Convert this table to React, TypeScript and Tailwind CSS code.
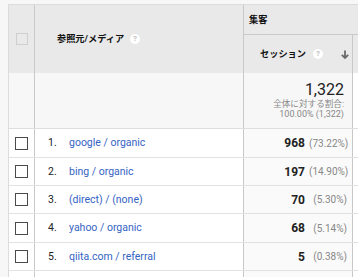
import React from "react";

const rows = [
  { n: "1.", label: "google / organic", v: "968", p: "(73.22%)", h: "h-[29px]" },
  { n: "2.", label: "bing / organic", v: "197", p: "(14.90%)", h: "h-[28px]" },
  { n: "3.", label: "(direct) / (none)", v: "70", p: "(5.30%)", h: "h-[28px]" },
  { n: "4.", label: "yahoo / organic", v: "68", p: "(5.14%)", h: "h-[29px]" },
  { n: "5.", label: "qiita.com / referral", v: "5", p: "(0.38%)", h: "h-[28px]" },
  { n: "", label: "", v: "", p: "", h: "h-[28px]" },
];

function Help() {
  return (
    <span className="ml-[6px] flex h-[10px] w-[10px] items-center justify-center rounded-full bg-white text-[8px] font-bold leading-none text-[#c4c4c4]">
      ?
    </span>
  );
}

export default function App() {
  return (
    <div className="h-[277px] w-[358px] overflow-hidden bg-[#f7f7f7] pl-[8px] pt-[4px] font-['Roboto','Noto_Sans_CJK_JP',sans-serif] text-[#333]">
      <div className="w-[350px] border-l border-t border-[#dcdcdc] bg-white">
        {/* Header */}
        <div className="flex h-[68px] bg-[#e9e9e9]">
          <div className="flex w-[26px] items-center justify-center border-r border-[#c9c9c9]">
            <div className="h-[12px] w-[12px] border border-[#cfcfcf]" />
          </div>
          <div className="flex w-[209px] items-center border-r border-[#c9c9c9] pl-[22px]">
            <span className="text-[9.2px] font-bold text-[#111]">参照元/メディア</span>
            <Help />
          </div>
          <div className="flex flex-1 flex-col">
            <div className="flex h-[30px] items-center border-b border-[#c9c9c9] pl-[5px] text-[9.2px] font-bold text-[#111]">
              集客
            </div>
            <div className="flex h-[38px]">
              <div className="flex w-[109px] items-center justify-end border-r border-[#c9c9c9] pr-[3px]">
                <span className="text-[9.2px] font-bold text-[#111]">セッション</span>
                <span className="ml-[1px]"><Help /></span>
                <svg className="ml-[18px]" width="8" height="9" viewBox="0 0 8 9">
                  <path d="M4 0.5 V8 M0.8 4.8 L4 8 L7.2 4.8" stroke="#6a6a6a" strokeWidth="1.8" fill="none" />
                </svg>
              </div>
              <div className="flex-1" />
            </div>
          </div>
        </div>

        {/* Total row */}
        <div className="flex h-[56px] border-b border-[#dedede] bg-[#f7f7f7]">
          <div className="w-[26px] border-r border-[#c9c9c9]" />
          <div className="w-[209px] border-r border-[#c9c9c9]" />
          <div className="flex w-[109px] flex-col items-end border-r border-[#c9c9c9] pr-[8px] pt-[8px]">
            <div className="text-[16px] leading-[18px] text-[#222]">1,322</div>
            <div className="text-[8.6px] leading-[10px] text-[#888]">全体に対する割合:</div>
            <div className="text-[9px] leading-[10px] text-[#888]">100.00% (1,322)</div>
          </div>
          <div className="flex-1 bg-white" />
        </div>

        {/* Data rows */}
        {rows.map((r, i) => (
          <div key={i} className={`flex border-b border-[#e2e2e2] ${r.h}`}>
            <div className="flex w-[26px] items-center justify-center border-r border-[#c9c9c9]">
              <div className="h-[13px] w-[13px] border border-[#4a4a4a] bg-white" />
            </div>
            <div className="flex w-[209px] items-center border-r border-[#c9c9c9] pl-[13px] text-[10.5px]">
              <span className="w-[21px] text-[#222]">{r.n}</span>
              <span className="text-[#3563c4]">{r.label}</span>
            </div>
            <div className="flex w-[109px] items-center justify-end border-r border-[#c9c9c9] bg-[#fafafa] pr-[5px]">
              <span className="text-[12px] font-bold text-[#222]">{r.v}</span>
              <span className="ml-[4px] w-[38px] text-right text-[10px] text-[#888]">{r.p}</span>
            </div>
            <div className="flex-1" />
          </div>
        ))}
      </div>
    </div>
  );
}
